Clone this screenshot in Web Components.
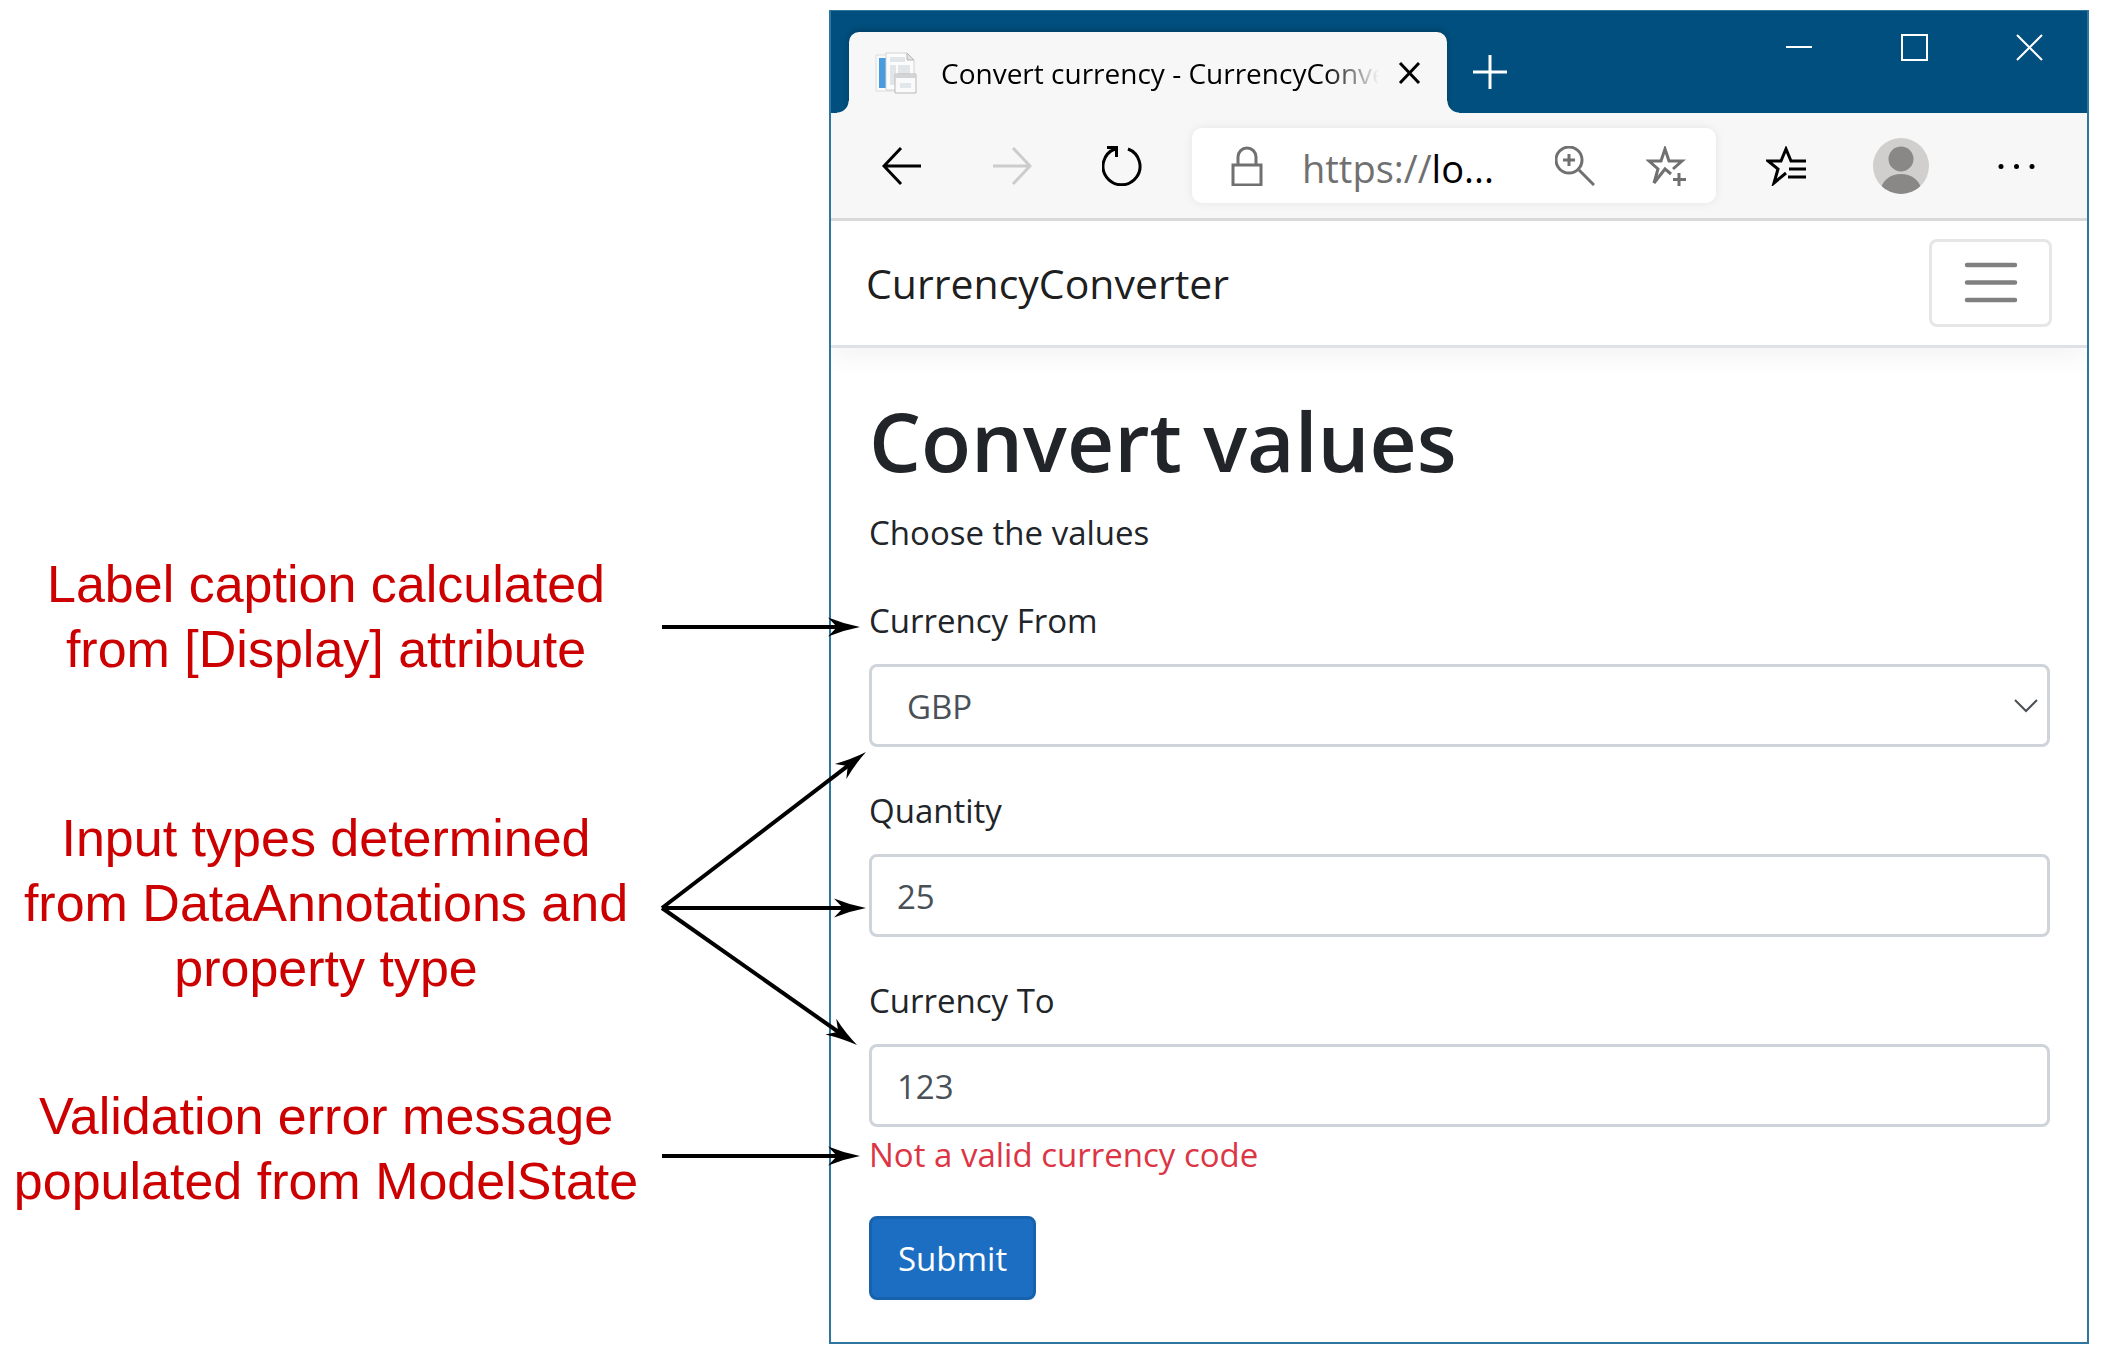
<!DOCTYPE html>
<html lang="en">
<head>
<meta charset="utf-8">
<title>Convert currency - CurrencyConverter</title>
<style>
    body {
        margin: 0;
        background-color: #fff;
        color: #212529;
        font-family: "Open Sans", "Noto Sans", sans-serif;
        font-size: 33px;
        line-height: 54px;
    }
</style>
</head>
<body>
<annotated-figure>
    <call-out slot="notes" origin="75" arrows="[[198, 0]]">Label caption calculated<br>from [Display] attribute</call-out>
    <call-out slot="notes" origin="102" arrows="[[204, -156], [204, 0], [195, 137]]">Input types determined<br>from DataAnnotations and<br>property type</call-out>
    <call-out slot="notes" origin="72" arrows="[[198, 0]]">Validation error message<br>populated from ModelState</call-out>
    <browser-window>
        <span slot="title">Convert currency - CurrencyConverter</span>
        <nav-bar>CurrencyConverter</nav-bar>
        <convert-form></convert-form>
    </browser-window>
</annotated-figure>

<script>
(function() {
    'use strict';

    const icons = {
        back: '<path d="M39 20H2M19 2L2 20l17 18" stroke-width="3"/>',
        forward: '<path d="M1 20h37M21 2l17 18-17 18" stroke-width="3"/>',
        refresh: '<path d="M26 3A18.500 18.500 0 1 1 13 3M5 1.500h9.500V11" stroke-width="3"/>',
        lock: '<path d="M6 19h28v20H6zM11 19V11a9 9 0 0 1 18 0v8" stroke-width="3"/>',
        zoom: '<circle cx="14" cy="14" r="13"/><path d="M8 14h12M14 8v12M24 24l15 15"/>',
        starPlus: '<path d="M25 28l-6-5-11 14 4-14L3 15h12l4-12 4 12h13L27 23M33 27v13M27 33.500h13"/>',
        favorites: '<path d="M20 27l-12 10 4-14L2 15h13l5-12 5 12h15M23 23h17M22 31h18" stroke-width="3"/>',
        more: '<g fill="currentColor" stroke="none"><circle cx="5" cy="20.500" r="2.500"/><circle cx="20.500" cy="20.500" r="2.500"/><circle cx="36" cy="20.500" r="2.500"/></g>',
        close: '<path d="M11 10l19 20M30 10L11 30" stroke-width="3"/>',
        plus: '<path d="M20 3v34M3 20h34" stroke-width="3"/>',
        minimize: '<path d="M7 20h26" stroke-width="2"/>',
        maximize: '<path d="M8 8h25v25H8z" stroke-width="2"/>',
        exit: '<path d="M8 8l25 25M33 8L8 33" stroke-width="2"/>'
    };

    function icon(name) {
        return `<svg viewBox="0 0 40 40" width="40" height="40" fill="none" stroke="currentColor" stroke-width="3" aria-hidden="true">${icons[name]}</svg>`;
    }

    class AnnotatedFigure extends HTMLElement {
        constructor() {
            super();

            this.attachShadow({mode: 'open'}).innerHTML = `
                <style>
                    :host {
                        display: grid;
                        grid-template-columns: 652px 1fr;
                        column-gap: 177px;
                        padding: 10px 16px 20px 0;
                    }

                    aside {
                        padding-top: 542px;
                    }
                </style>
                <aside><slot name="notes"></slot></aside>
                <slot></slot>
            `;
        }
    }

    class CallOut extends HTMLElement {
        constructor() {
            super();

            let y = Number(this.getAttribute('origin'));
            let arrows = JSON.parse(this.getAttribute('arrows'));

            this.attachShadow({mode: 'open'}).innerHTML = `
                <style>
                    :host {
                        display: block;
                        position: relative;
                        color: #c00;
                        font: 52px/65px "Liberation Sans", Arial, sans-serif;
                        text-align: center;
                    }

                    :host(:nth-of-type(2)) {
                        margin: 124px 0 83px;
                    }

                    svg {
                        position: absolute;
                        left: 100%;
                        top: 0;
                        margin-left: 10px;
                        overflow: visible;
                        pointer-events: none;
                        z-index: 1;
                    }
                </style>
                <slot></slot>
                <svg width="1" height="1" aria-hidden="true">
                    <g transform="translate(0 ${y})">${arrows.map(a => this.arrow(a[0], a[1])).join('')}</g>
                </svg>
            `;
        }

        arrow(dx, dy) {
            let length = Math.hypot(dx, dy);
            let angle = Math.atan2(dy, dx) * 180 / Math.PI;

            return `
                <g transform="rotate(${angle})">
                    <path d="M0 0H${length - 20}" stroke="#000" stroke-width="4"/>
                    <path transform="translate(${length} 0)" d="M0 0Q-16 3-32 9.500L-23 0L-32-9.500Q-16-3 0 0z"/>
                </g>
            `;
        }
    }

    class IconButton extends HTMLElement {
        constructor() {
            super();

            this.attachShadow({mode: 'open'}).innerHTML = `
                <style>
                    :host {
                        display: block;
                        flex: none;
                    }

                    button {
                        display: grid;
                        place-items: center;
                        width: 60px;
                        height: 60px;
                        padding: 0;
                        border: none;
                        background: none;
                        color: inherit;
                    }
                </style>
                <button type="button" aria-label="${this.getAttribute('label')}">${icon(this.getAttribute('icon'))}</button>
            `;
        }
    }

    class BrowserWindow extends HTMLElement {
        constructor() {
            super();

            this.attachShadow({mode: 'open'}).innerHTML = `
                <style>
                    :host {
                        display: block;
                        border: 2px solid #2f769f;
                        background-color: #fff;
                    }

                    .titlebar {
                        display: flex;
                        height: 102px;
                        margin-top: -1px;
                        padding: 0 28px 0 18px;
                        background-color: #004f7e;
                        color: #fff;
                    }

                    .tab {
                        --foot: #0000 11px, #f7f7f7 12px;
                        display: flex;
                        flex: 0 1 598px;
                        align-items: center;
                        align-self: flex-end;
                        box-sizing: border-box;
                        height: 81px;
                        min-width: 0;
                        margin-right: 13px;
                        padding: 0 8px 0 26px;
                        position: relative;
                        border-radius: 10px 10px 0 0;
                        background-color: #f7f7f7;
                        box-shadow: 0 -2px 6px rgba(0,0,0,.2);
                        clip-path: inset(-8px -12px 0);
                        color: #000;
                    }

                    .tab::before, .tab::after {
                        content: '';
                        position: absolute;
                        bottom: 0;
                        width: 12px;
                        height: 12px;
                    }

                    .tab::before {
                        right: 100%;
                        background: radial-gradient(circle at 0 0, var(--foot));
                    }

                    .tab::after {
                        left: 100%;
                        background: radial-gradient(circle at 100% 0, var(--foot));
                    }

                    .caption {
                        flex: 1;
                        margin-left: 24px;
                        overflow: hidden;
                        font-size: 28px;
                        white-space: nowrap;
                        -webkit-mask-image: linear-gradient(to left, transparent, #000 54px);
                        mask-image: linear-gradient(to left, transparent, #000 54px);
                    }

                    .new {
                        margin-top: 31px;
                    }

                    .controls {
                        display: flex;
                        gap: 55px;
                        margin-left: auto;
                        padding-top: 6px;
                    }

                    .toolbar {
                        display: flex;
                        align-items: center;
                        gap: 50px;
                        height: 105px;
                        padding: 0 41px;
                        border-bottom: 3px solid #d9d9d9;
                        background-color: #f7f7f7;
                        color: #000;
                    }

                    .off {
                        color: #ccc;
                    }

                    .address {
                        display: flex;
                        flex: 1;
                        align-items: center;
                        box-sizing: border-box;
                        height: 75px;
                        min-width: 0;
                        margin: 0 -10px;
                        padding: 0 20px 0 25px;
                        border-radius: 10px;
                        background-color: #fff;
                        box-shadow: 0 0 10px rgba(0,0,0,.08);
                        color: #707070;
                    }

                    .url {
                        flex: 1;
                        margin-left: 25px;
                        padding-top: 4px;
                        font-size: 38px;
                    }

                    .url b {
                        color: #000;
                        font-weight: normal;
                    }

                    .address .star {
                        margin-left: 31px;
                    }

                    .side {
                        display: flex;
                        gap: 55px;
                    }

                    .avatar {
                        display: grid;
                        place-items: center;
                        width: 60px;
                        height: 60px;
                        padding: 0;
                        border: none;
                        background: none;
                    }
                </style>
                <div class="titlebar">
                    <div class="tab">
                        <svg width="42" height="42" viewBox="0 0 42 42" aria-hidden="true">
                            <path d="M1 3h28v36H1z" fill="#fafafa" stroke="#dcdcdc"/>
                            <path d="M4 6h7v30H4z" fill="#4a9ade"/>
                            <path d="M11 1h21l7 7v30H11z" fill="#fcfcfc" stroke="#d2d2d2"/>
                            <path d="M32 1v7h7z" fill="#e2e2e2" stroke="#b5b5b5"/>
                            <path d="M15 5h15v5H15zM15 13h6v20h-6zM23 13h12v9H23z" fill="#e2e6e9"/>
                            <path d="M20 22h21v19H20z" fill="#fafafa" stroke="#b9b9b9"/>
                            <path d="M20 22h21v4H20z" fill="#d2d4d5"/>
                            <path d="M25 31h11v5H25z" fill="#e1e8ec"/>
                        </svg>
                        <span class="caption"><slot name="title"></slot></span>
                        <icon-button icon="close" label="Close tab"></icon-button>
                    </div>
                    <icon-button class="new" icon="plus" label="New tab"></icon-button>
                    <div class="controls">
                        <icon-button icon="minimize" label="Minimize"></icon-button>
                        <icon-button icon="maximize" label="Maximize"></icon-button>
                        <icon-button icon="exit" label="Close"></icon-button>
                    </div>
                </div>
                <div class="toolbar">
                    <icon-button icon="back" label="Back"></icon-button>
                    <icon-button class="off" icon="forward" label="Forward"></icon-button>
                    <icon-button icon="refresh" label="Refresh"></icon-button>
                    <div class="address">
                        <icon-button icon="lock" label="Site information"></icon-button>
                        <span class="url">https://<b>lo...</b></span>
                        <icon-button icon="zoom" label="Zoom"></icon-button>
                        <icon-button class="star" icon="starPlus" label="Add to favorites"></icon-button>
                    </div>
                    <div class="side">
                        <icon-button icon="favorites" label="Favorites"></icon-button>
                        <button class="avatar" type="button" aria-label="Profile">
                            <svg width="58" height="58" viewBox="0 0 58 58" aria-hidden="true">
                                <clipPath id="disc"><circle cx="29" cy="29" r="28"/></clipPath>
                                <circle cx="29" cy="29" r="28" fill="#d0cfce"/>
                                <g fill="#8a8886" clip-path="url(#disc)">
                                    <circle cx="29" cy="22" r="12.500"/>
                                    <path d="M8 58C8 44 18 37 29 37s21 7 21 21z"/>
                                </g>
                            </svg>
                        </button>
                        <icon-button icon="more" label="Settings and more"></icon-button>
                    </div>
                </div>
                <slot></slot>
            `;
        }
    }

    class NavBar extends HTMLElement {
        constructor() {
            super();

            this.attachShadow({mode: 'open'}).innerHTML = `
                <style>
                    :host {
                        display: block;
                        overflow: hidden;
                        padding-bottom: 36px;
                    }

                    nav {
                        display: flex;
                        align-items: center;
                        justify-content: space-between;
                        padding: 18px 35px;
                        border-bottom: 3px solid #dee2e6;
                        box-shadow: 0 9px 26px rgba(0,0,0,.05);
                    }

                    a {
                        color: rgba(0,0,0,.9);
                        font-size: 41px;
                        text-decoration: none;
                    }

                    button {
                        display: grid;
                        place-items: center;
                        width: 123px;
                        height: 88px;
                        padding: 0;
                        border: 3px solid #e6e6e6;
                        border-radius: 8px;
                        background: none;
                    }
                </style>
                <nav>
                    <a href="#"><slot></slot></a>
                    <button type="button" aria-label="Toggle navigation">
                        <svg width="66" height="66" viewBox="0 0 66 66" stroke="#808080" stroke-width="4.500" stroke-linecap="round" aria-hidden="true">
                            <path d="M9 15h48M9 32.500h48M9 50h48"/>
                        </svg>
                    </button>
                </nav>
            `;
        }
    }

    class FormField extends HTMLElement {
        constructor() {
            super();

            let value = this.getAttribute('value');
            let error = this.getAttribute('error');
            let control = this.hasAttribute('select')
                ? `<select id="control"><option>${value}</option></select>
                   <svg width="24" height="16" viewBox="0 0 24 16" fill="none" stroke="#495057" stroke-width="2" aria-hidden="true"><path d="M1 2l11 11L23 2"/></svg>`
                : `<input id="control" type="text" value="${value}">`;

            this.attachShadow({mode: 'open'}).innerHTML = `
                <style>
                    :host {
                        display: block;
                        margin-bottom: 37px;
                    }

                    label {
                        display: block;
                        margin-bottom: 16px;
                    }

                    .control {
                        display: grid;
                        align-items: center;
                    }

                    input, select {
                        grid-area: 1 / 1;
                        box-sizing: border-box;
                        width: 100%;
                        height: 83px;
                        padding: 2px 25px 0;
                        border: 3px solid #ced4da;
                        border-radius: 8px;
                        background-color: #fff;
                        color: #495057;
                        font: inherit;
                    }

                    select {
                        padding-left: 35px;
                        appearance: none;
                    }

                    svg {
                        grid-area: 1 / 1;
                        justify-self: end;
                        margin-right: 12px;
                        pointer-events: none;
                    }

                    .error {
                        display: block;
                        margin-top: 4px;
                        color: #dc3545;
                        line-height: 48px;
                    }
                </style>
                <label for="control">${this.getAttribute('label')}</label>
                <div class="control">${control}</div>
                ${error ? `<span class="error">${error}</span>` : ''}
            `;
        }
    }

    class ConvertForm extends HTMLElement {
        constructor() {
            super();

            this.attachShadow({mode: 'open'}).innerHTML = `
                <style>
                    :host {
                        display: block;
                        padding: 0 37px 42px 38px;
                    }

                    h1 {
                        margin: 0 0 10px;
                        font-size: 82px;
                        font-weight: 600;
                        line-height: 112px;
                    }

                    p {
                        margin: 0 0 34px;
                    }

                    button {
                        height: 84px;
                        padding: 2px 26px 0;
                        border: 3px solid #1861ac;
                        border-radius: 8px;
                        background-color: #1b6ec2;
                        color: #fff;
                        font: inherit;
                    }
                </style>
                <h1>Convert values</h1>
                <p>Choose the values</p>
                <form>
                    <form-field label="Currency From" value="GBP" select></form-field>
                    <form-field label="Quantity" value="25"></form-field>
                    <form-field label="Currency To" value="123" error="Not a valid currency code"></form-field>
                    <button type="button">Submit</button>
                </form>
            `;
        }
    }

    customElements.define('icon-button', IconButton);
    customElements.define('form-field', FormField);
    customElements.define('nav-bar', NavBar);
    customElements.define('convert-form', ConvertForm);
    customElements.define('call-out', CallOut);
    customElements.define('browser-window', BrowserWindow);
    customElements.define('annotated-figure', AnnotatedFigure);
})();
</script>
</body>
</html>
